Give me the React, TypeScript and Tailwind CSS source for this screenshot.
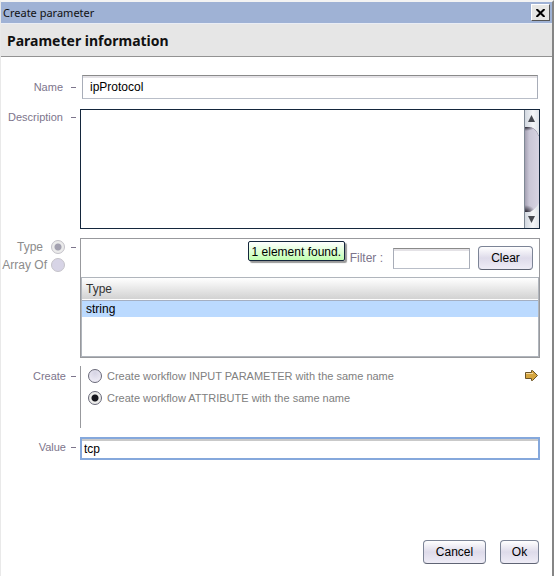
import { useState } from "react";
import type { ReactNode } from "react";

function Row({ label, htmlFor, children, labelClass, className = "" }: { label: string; htmlFor: string; children: ReactNode; labelClass: string; className?: string }) {
  return (
    <div className={"flex items-start " + className}>
      <label htmlFor={htmlFor} className={"flex w-[79px] shrink-0 justify-end pr-1 text-[11px] leading-3 text-[#7d758c] " + labelClass}>
        {label}
        <span className="mt-1.5 h-px w-[5px] bg-[#7d758c]" />
      </label>
      <div className="min-w-0 flex-1">{children}</div>
    </div>
  );
}

const fieldBorder = "border border-t-[#8a8a8a] border-l-[#a8adb8] border-r-[#a8adb8] border-b-[#b9bec8] bg-white shadow-[inset_0_2px_0_#e4e2e6] outline-none";
const buttonLook = "h-6 rounded-[4px] border border-[#7c8496] border-b-[#5f6474] bg-linear-to-b from-white via-[#dedbea] to-[#eeecf6] text-[12px] leading-4 text-black";
const radioLook = "size-[14px] shrink-0 appearance-none rounded-full border border-[#686878] bg-[radial-gradient(circle_at_50%_25%,#d6d4e4,#f4f2fa)] checked:bg-[radial-gradient(circle,#15151c_0_3px,#ececea_4px)]";
const dimRadioLook = "size-[14px] shrink-0 appearance-none rounded-full border border-[#c5c3c9] bg-[#d7d4e6] checked:bg-[radial-gradient(circle,#a3a1b0_0_3px,#ebebeb_4px)]";

function ScrollBar() {
  return (
    <svg viewBox="0 0 15 118" className="h-[118px] w-[15px] shrink-0" aria-hidden="true">
      <defs>
        <linearGradient id="track" x1="0" x2="1" y1="0" y2="0">
          <stop offset="0" stopColor="#cdd3dc" />
          <stop offset="0.6" stopColor="#f3f5f8" />
          <stop offset="1" stopColor="#dfe3e9" />
        </linearGradient>
        <linearGradient id="thumb" x1="0" x2="1" y1="0" y2="0">
          <stop offset="0" stopColor="#9c98aa" />
          <stop offset="0.35" stopColor="#c9c6d6" />
          <stop offset="1" stopColor="#d6d3e2" />
        </linearGradient>
        <radialGradient id="corner">
          <stop offset="0" stopColor="#2e2c38" />
          <stop offset="1" stopColor="#2e2c38" stopOpacity="0" />
        </radialGradient>
        <clipPath id="thumbShape"><path d="M1 17h5q6 1 9 9v67q-3 6-9 9H1z" /></clipPath>
      </defs>
      <rect width="15" height="118" fill="url(#track)" />
      <g clipPath="url(#thumbShape)">
        <rect y="17" width="15" height="85" fill="url(#thumb)" />
        <ellipse cx="2" cy="17" rx="9" ry="4" fill="url(#corner)" />
        <ellipse cx="2" cy="102" rx="9" ry="7" fill="url(#corner)" />
        <path d="M6 17q6 1 9 9" fill="none" stroke="#8d8a9b" />
      </g>
      <path d="M0 0h1v118H0z" fill="#7f8995" />
      <path d="M4 12l3.500-7 3.500 7z" fill="#454850" />
      <path d="M4 106l3.500 7 3.500-7z" fill="#454850" />
    </svg>
  );
}

export default function App() {
  const [name, setName] = useState("ipProtocol");
  const [value, setValue] = useState("tcp");
  const [filter, setFilter] = useState("");
  return (
    <div className="min-h-screen border-t-2 border-r-2 border-l border-t-[#f3f3f3] border-r-[#858585] border-l-[#e9e9e9] bg-white font-['Liberation_Sans',Arial,sans-serif]">
      <div className="flex h-[22px] items-center justify-between border-b border-[#e9edf5] bg-[#9fb2d5] px-0.5">
        <span className="font-['Noto_Sans',sans-serif] text-[11px] leading-4 text-[#111]">Create parameter</span>
        <button aria-label="Close" className="flex h-[17px] w-[19px] items-center justify-center border border-t-white border-r-[#555] border-b-[#555] border-l-white bg-[#e6e6e4]">
          <svg viewBox="0 0 9 8" className="h-2 w-[9px]"><path d="M0.500 0l8 8M8.500 0l-8 8" stroke="#000" strokeWidth="2" /></svg>
        </button>
      </div>
      <h1 className="flex h-[33px] items-center border-b border-[#929292] bg-[#e6e6e6] pt-0.5 pl-1.5 font-['Noto_Sans',sans-serif] text-[14px] leading-5 font-bold text-[#111]">Parameter information</h1>
      <form className="flex flex-col pt-[18px] pr-3" onSubmit={(e) => e.preventDefault()}>
        <Row label="Name" htmlFor="name" labelClass="gap-2 pt-1.5">
          <div className="px-0.5">
            <input id="name" value={name} onChange={(e) => setName(e.target.value)} className={"block h-6 w-full pl-[7px] text-[12px] leading-4 text-black " + fieldBorder} />
          </div>
        </Row>
        <Row label="Description" htmlFor="description" labelClass="gap-2 pt-0.5" className="mt-2.5">
          <div className="flex border border-[#14263c]">
            <textarea id="description" className="block h-[118px] min-w-0 flex-1 resize-none text-[12px] outline-none" />
            <ScrollBar />
          </div>
        </Row>
        <div className="mt-[9px] flex items-start">
          <div className="flex w-[79px] shrink-0 justify-end pt-px pr-1 text-[12px] leading-4 text-[#8c8c8c]">
            <div className="flex flex-col gap-0.5 whitespace-nowrap">
              <label className="flex items-center justify-end gap-2">Type<input type="radio" name="kind" disabled defaultChecked className={dimRadioLook} /></label>
              <label className="flex items-center justify-end gap-1">Array Of<input type="radio" name="kind" disabled className={dimRadioLook} /></label>
            </div>
            <span className="mt-2 ml-1.5 h-px w-[5px] shrink-0 bg-[#7d758c]" />
          </div>
          <div className="relative h-[120px] min-w-0 flex-1 border border-[#98999d]">
            <div className="flex h-[38px] items-center justify-end pr-1.5">
              <label htmlFor="filter" className="pr-2.5 text-[12px] leading-4 text-[#7d758c]">Filter :</label>
              <input id="filter" value={filter} onChange={(e) => setFilter(e.target.value)} className={"mr-2 h-[21px] w-[77px] px-1 text-[12px] " + fieldBorder} />
              <button type="button" className={"w-[55px] " + buttonLook}>Clear</button>
            </div>
            <span role="status" className="absolute top-0.5 right-[194px] h-5 rounded-[2px] border border-[#14263c] bg-linear-to-b from-white to-[#c0ffb0] px-[3px] text-[12px] leading-5 whitespace-nowrap text-black shadow-[2px_2px_1px_#999]">1 element found.</span>
            <div className="h-20 border border-[#b0b5bc]">
              <table className="w-full border-collapse text-left text-[12px] leading-4">
                <thead><tr className="h-[22px] border-b border-[#a4afc2] bg-linear-to-b from-white to-[#d2d2d2]"><th className="pl-1 font-normal text-[#333]">Type</th></tr></thead>
                <tbody><tr className="h-[17px] bg-[#bbdaff]"><td className="pl-1 text-black">string</td></tr></tbody>
              </table>
            </div>
          </div>
        </div>
        <div role="radiogroup" aria-labelledby="create-label" className="mt-2 flex items-start">
          <div id="create-label" className="flex w-[79px] shrink-0 justify-end gap-[5px] pt-1 pr-1 text-[11px] leading-3 text-[#7d758c]">Create<span className="mt-1.5 h-px w-[5px] bg-[#7d758c]" /></div>
          <div className="flex h-[62px] min-w-0 flex-1 items-start justify-between border-l border-[#98999d] pl-[7px] text-[11px] leading-4 text-[#808080]">
            <div className="flex flex-col gap-1.5 pt-0.5">
              <label className="flex items-center gap-[5px]"><input type="radio" name="create" className={radioLook} />Create workflow INPUT PARAMETER with the same name</label>
              <label className="flex items-center gap-[5px]"><input type="radio" name="create" defaultChecked className={radioLook} />Create workflow ATTRIBUTE with the same name</label>
            </div>
            <svg viewBox="0 0 13 11" className="mt-1 mr-0.5 h-[11px] w-[13px] shrink-0" aria-hidden="true">
              <path d="M.5 2.500h6v-2h1l5 5-5 5h-1v-2h-6z" fill="#d6a640" stroke="#6b5428" />
              <path d="M1 3.500h7" stroke="#f6d9a0" />
            </svg>
          </div>
        </div>
        <Row label="Value" htmlFor="value" labelClass="gap-[5px] pt-1" className="mt-[9px]">
          <input id="value" autoFocus value={value} onChange={(e) => setValue(e.target.value)} className="block h-[23px] w-full border-2 border-[#85a8dc] bg-white pl-0.5 text-[12px] leading-4 text-black shadow-[inset_0_2px_0_#c9c9c9] outline-none" />
        </Row>
        <div className="mt-20 flex justify-end gap-3.5 pr-px">
          <button type="button" className={"w-[63px] " + buttonLook}>Cancel</button>
          <button type="submit" className={"w-[39px] " + buttonLook}>Ok</button>
        </div>
      </form>
    </div>
  );
}
